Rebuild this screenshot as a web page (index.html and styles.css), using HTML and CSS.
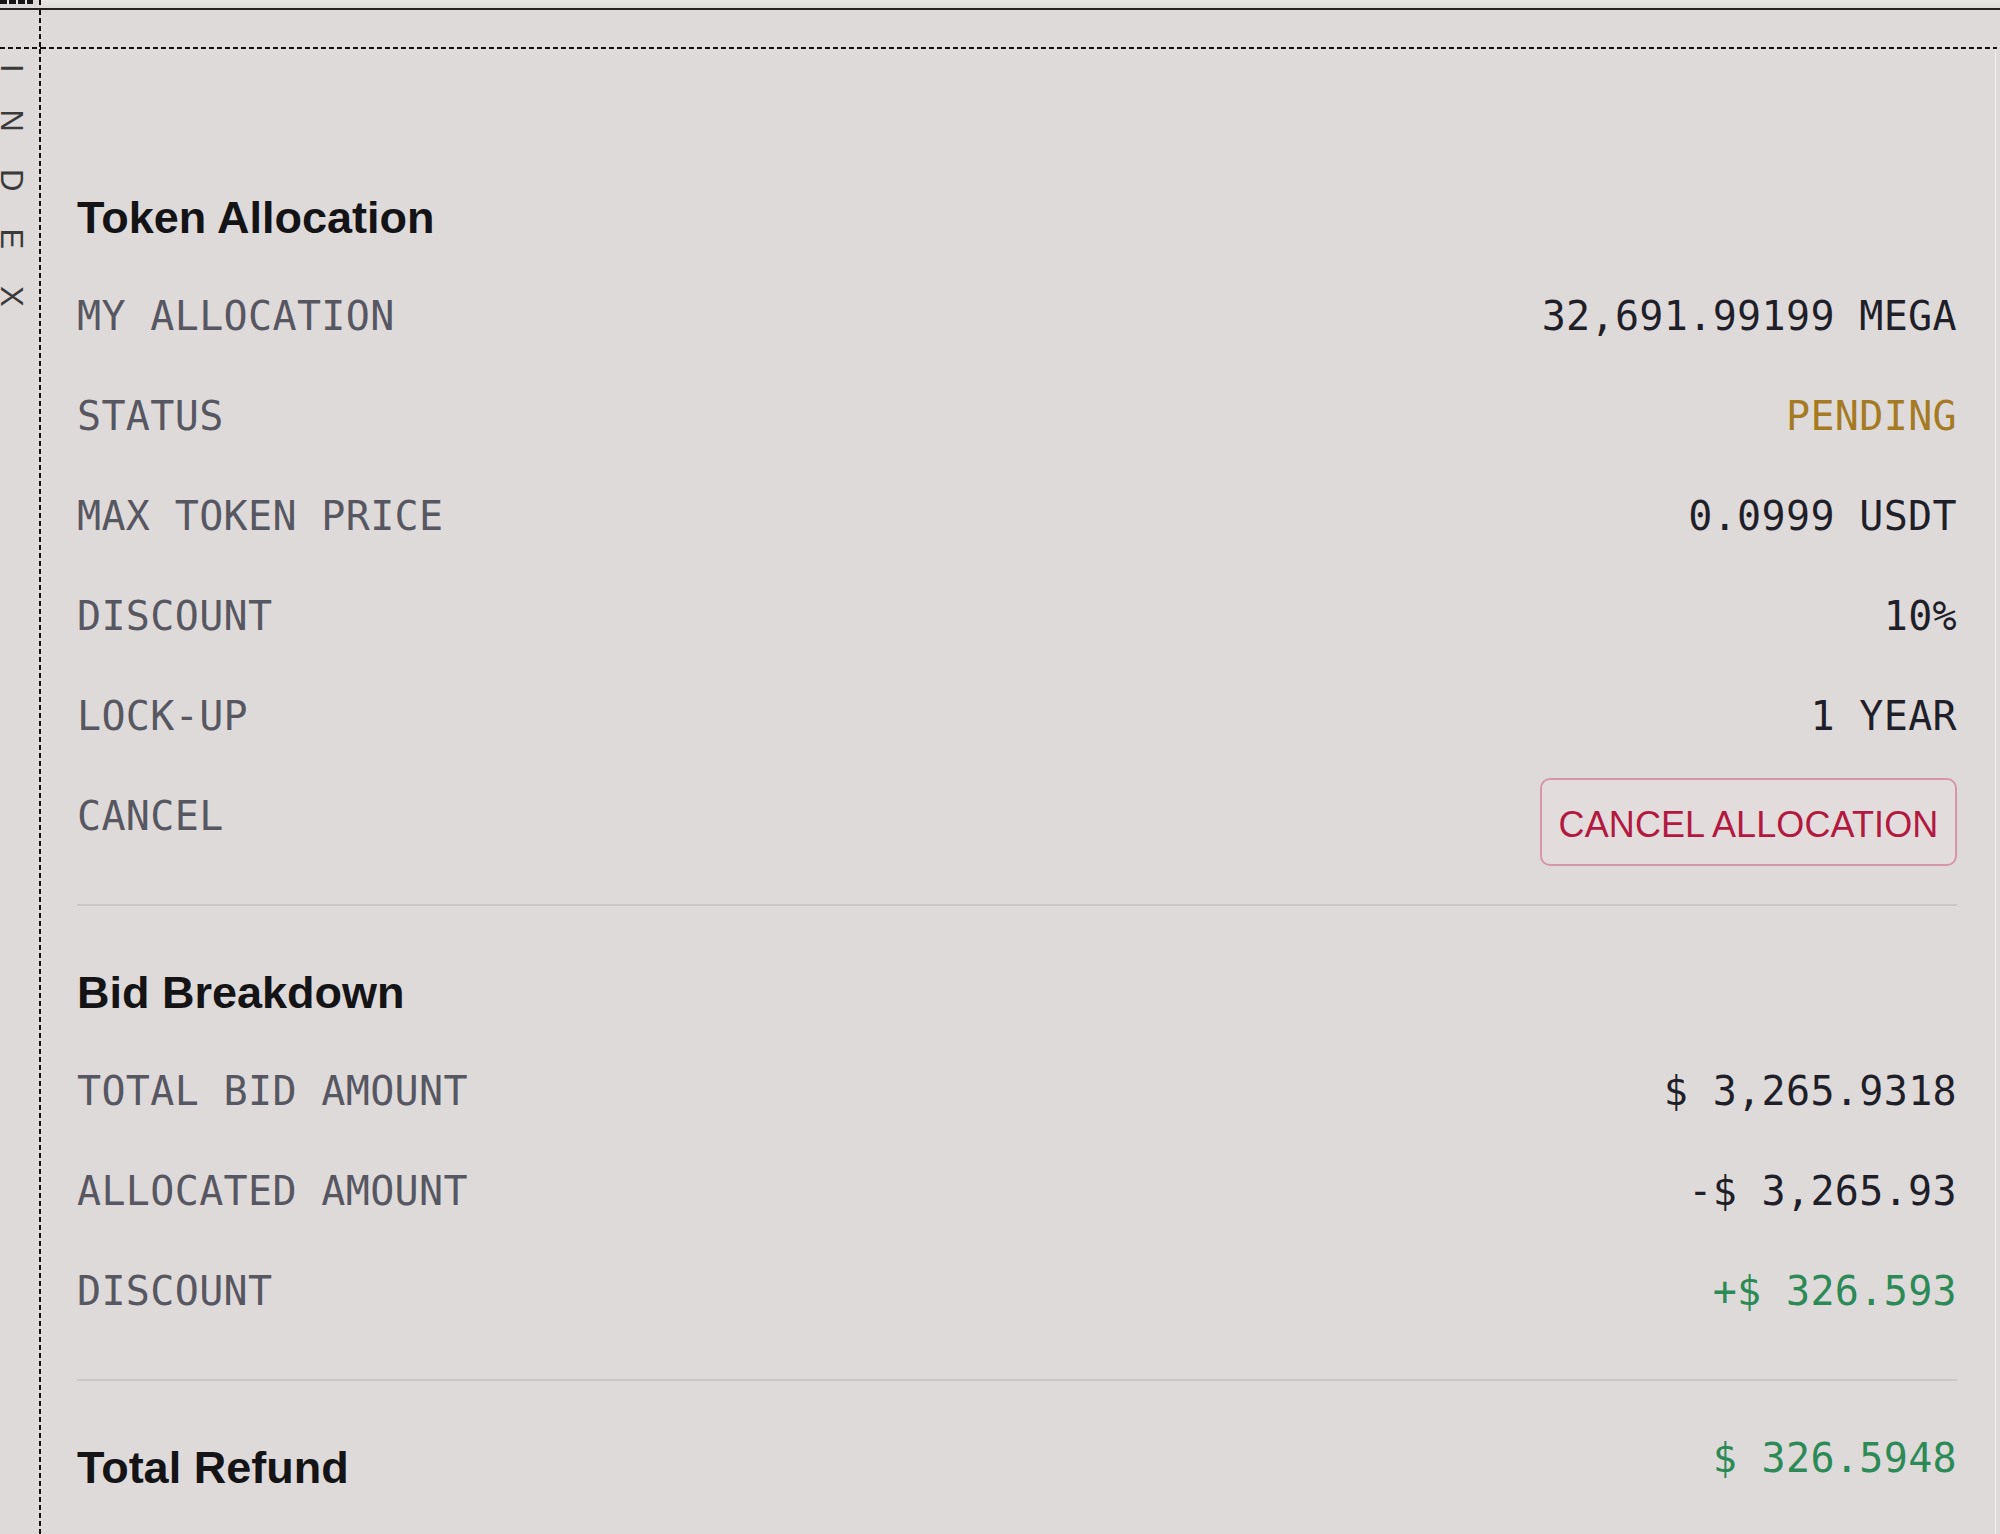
FILE: index.html
```html
<!DOCTYPE html>
<html lang="en">
<head>
<meta charset="utf-8">
<title>Token Allocation</title>
<link rel="stylesheet" href="styles.css">
</head>
<body>
<div class="page">
  <div class="corner-top"><span class="tab"></span></div>
  <div class="topbar"></div>
  <div class="corner-head"></div>
  <div class="headbar"></div>
  <aside class="side"><span class="side-label">INDEX</span></aside>
  <main class="main">
    <section class="section">
      <h2 class="title">Token Allocation</h2>
      <dl class="rows">
        <div class="row"><dt class="label">MY ALLOCATION</dt><dd class="value">32,691.99199 MEGA</dd></div>
        <div class="row"><dt class="label">STATUS</dt><dd class="value value-pending">PENDING</dd></div>
        <div class="row"><dt class="label">MAX TOKEN PRICE</dt><dd class="value">0.0999 USDT</dd></div>
        <div class="row"><dt class="label">DISCOUNT</dt><dd class="value">10%</dd></div>
        <div class="row"><dt class="label">LOCK-UP</dt><dd class="value">1 YEAR</dd></div>
        <div class="row"><dt class="label">CANCEL</dt><dd class="value"><button class="btn-cancel" type="button">CANCEL ALLOCATION</button></dd></div>
      </dl>
    </section>
    <hr class="divider">
    <section class="section">
      <h2 class="title">Bid Breakdown</h2>
      <dl class="rows">
        <div class="row"><dt class="label">TOTAL BID AMOUNT</dt><dd class="value">$ 3,265.9318</dd></div>
        <div class="row"><dt class="label">ALLOCATED AMOUNT</dt><dd class="value">-$ 3,265.93</dd></div>
        <div class="row"><dt class="label">DISCOUNT</dt><dd class="value value-positive">+$ 326.593</dd></div>
      </dl>
    </section>
    <hr class="divider">
    <section class="total">
      <h2 class="title">Total Refund</h2>
      <div class="total-value">$ 326.5948</div>
    </section>
  </main>
</div>
</body>
</html>
```
FILE: styles.css
```css
* { box-sizing: border-box; }

html, body {
  margin: 0;
  padding: 0;
  background: #dfdada;
  overflow: hidden;
}

.page {
  display: grid;
  grid-template-columns: 41px 1fr;
  grid-template-rows: 10px 39px 1fr;
  width: 2000px;
  height: 1534px;
}

/* vertical dashed rule on column 1, horizontal rules on rows 1 and 2 */
.corner-top {
  grid-column: 1;
  grid-row: 1;
  position: relative;
  border-bottom: 2px solid #222;
  background: repeating-linear-gradient(to bottom, #111 0 5px, transparent 5px 8px) right top / 2px 100% no-repeat;
}

.tab {
  position: absolute;
  left: 0;
  top: 0;
  width: 33px;
  height: 4px;
  background: repeating-linear-gradient(to right, #151515 0 7px, #e8e4e4 7px 9px);
}

.topbar {
  grid-column: 2;
  grid-row: 1;
  border-bottom: 2px solid #222;
  background: linear-gradient(#e9e6e6, #dedada);
}

.corner-head {
  grid-column: 1;
  grid-row: 2;
  background:
    repeating-linear-gradient(to bottom, #111 0 5px, transparent 5px 8px) right top / 2px 100% no-repeat,
    repeating-linear-gradient(to right, #111 0 5px, transparent 5px 8px) left bottom / 100% 2px no-repeat;
}

.headbar {
  grid-column: 2;
  grid-row: 2;
  background: repeating-linear-gradient(to right, #111 0 5px, transparent 5px 8px) left bottom / calc(100% - 3px) 2px no-repeat;
}

.side {
  grid-column: 1;
  grid-row: 3;
  padding-top: 15px;
  background: repeating-linear-gradient(to bottom, #111 0 5px, transparent 5px 8px) right top / 2px 100% no-repeat;
}

.side-label {
  display: block;
  writing-mode: vertical-rl;
  width: 32px;
  margin-left: -5px;
  font-family: "Liberation Sans", Arial, sans-serif;
  font-size: 31px;
  line-height: 32px;
  letter-spacing: 37px;
  color: #3a3a3a;
}

.main {
  grid-column: 2;
  grid-row: 3;
  margin-right: 4px;
  padding: 144px 38px 0 36px;
  border-right: 1px solid #f2efef;
}

.title {
  margin: 0;
  font-family: "Liberation Sans", Arial, sans-serif;
  font-weight: 700;
  font-size: 45px;
  line-height: 50px;
  color: #141416;
}

.rows {
  margin: 23px 0 0;
  padding: 0;
}

.row {
  display: flex;
  justify-content: space-between;
  align-items: center;
  height: 100px;
}

.label,
.value,
.total-value {
  margin: 0;
  font-family: "DejaVu Sans Mono", "Liberation Mono", monospace;
  font-size: 40px;
  line-height: 50px;
  letter-spacing: 0.35px;
  white-space: pre;
}

.label { color: #575761; }
.value { color: #1f1f29; }
.value-pending { color: #a47b22; }
.value-positive { color: #2b8a56; }

.btn-cancel {
  display: flex;
  align-items: center;
  justify-content: center;
  margin-top: 12px;
  height: 88px;
  width: 417px;
  padding: 6px 0 0;
  background: #e2dcdd;
  border: 2px solid #d796a8;
  border-radius: 10px;
  font-family: "Liberation Sans", Arial, sans-serif;
  font-size: 36px;
  letter-spacing: 0.1px;
  color: #b3183f;
}

.divider {
  margin: 38px 0 62px;
  height: 2px;
  border: 0;
  background: #cbc6c6;
}

.total {
  display: flex;
  justify-content: space-between;
  align-items: flex-start;
}

.total-value {
  line-height: 30px;
  color: #2b8a56;
}
```
